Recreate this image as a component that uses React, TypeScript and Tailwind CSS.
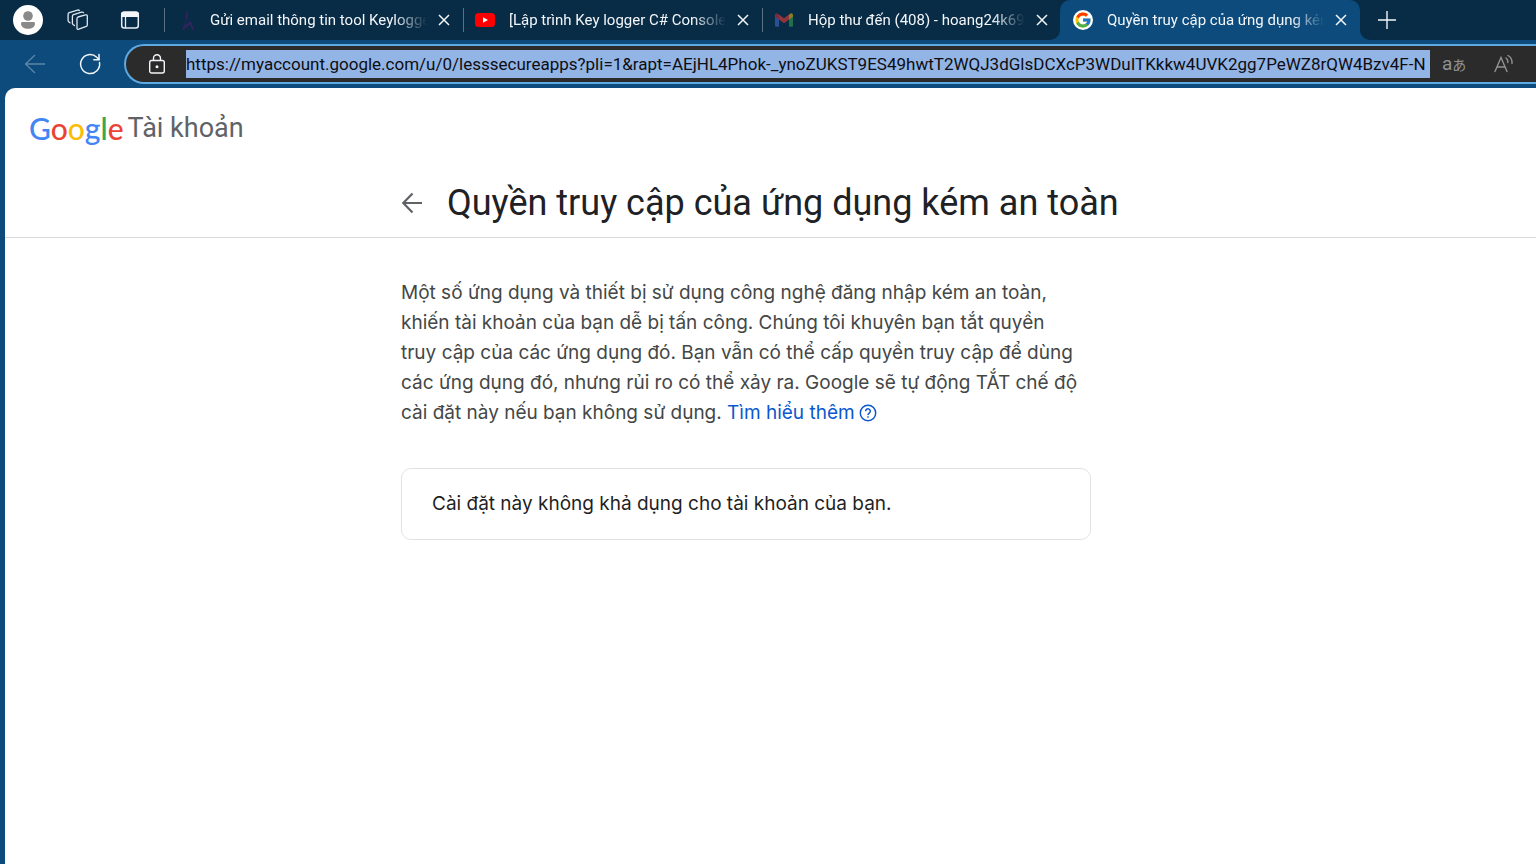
import type { ReactNode } from "react";
import { FcGoogle } from "react-icons/fc";

const uiFont = "font-['Roboto','Noto_Sans',sans-serif]";
const pageFont = "font-['Roboto','Liberation_Sans',sans-serif]";

const url =
  "https://myaccount.google.com/u/0/lesssecureapps?pli=1&rapt=AEjHL4Phok-_ynoZUKST9ES49hwtT2WQJ3dGlsDCXcP3WDuITKkkw4UVK2gg7PeWZ8rQW4Bzv4F-N";

function SiteIcon() {
  return (
    <svg viewBox="0 0 20 20" className="size-5" fill="#33235f" aria-hidden="true">
      <path d="M10.300 1h1.200l.4 6-2.800 8.500L8.500 20H6.300l3.500-9.500z" />
      <path d="M8.800 16 13.500 11.800q1.300-.9 1.900.6L18.200 20h-2.100l-2.300-5.700-5 4.700z" />
    </svg>
  );
}

function YoutubeIcon() {
  return (
    <svg viewBox="0 0 20 20" className="size-5" aria-hidden="true">
      <rect x="0" y="3" width="20" height="14" rx="3.500" fill="#f00" />
      <path d="M8 7.200v5.600l5-2.800z" fill="#fff" />
    </svg>
  );
}

function GmailIcon() {
  return (
    <svg viewBox="0 0 20 20" className="size-5" aria-hidden="true">
      <path d="M1 5v10.500c0 .8.500 1.300 1.300 1.300H5V8.200z" fill="#285294" />
      <path d="M15 8.200v8.600h2.700c.8 0 1.300-.5 1.300-1.300V5z" fill="#22704a" />
      <path d="M5 4.500v5l5 3.800 5-3.800v-5l-5 3.800z" fill="#92353a" />
      <path d="M1 5.200v1.500l4 3V4.500l-.8-.6C2.700 2.800 1 3.500 1 5.200z" fill="#7c2b3d" />
      <path d="M19 5.200v1.500l-4 3V4.500l.8-.6C17.300 2.800 19 3.500 19 5.200z" fill="#8f7c25" />
    </svg>
  );
}

function GoogleIcon() {
  return (
    <span className="flex size-5 items-center justify-center rounded-full bg-white">
      <FcGoogle className="size-[18px]" aria-hidden="true" />
    </span>
  );
}

function Tab({ icon, title, active, divided }: { icon: ReactNode; title: string; active?: boolean; divided?: boolean }) {
  return (
    <div
      className={
        active
          ? "relative -ml-px flex h-10 w-[300px] shrink-0 items-center rounded-t-[10px] bg-[#0c4b7b] pl-[13px]"
          : "relative flex h-10 w-[299px] shrink-0 items-center pl-3"
      }
    >
      {divided && <span className="absolute top-2 left-0 h-6 w-px bg-[#5a7083]" />}
      {active && (
        <>
          <svg viewBox="0 0 10 10" className="absolute bottom-0 -left-[10px] size-[10px]" aria-hidden="true">
            <path d="M10 0v10H0A10 10 0 0 0 10 0z" fill="#0c4b7b" />
          </svg>
          <svg viewBox="0 0 10 10" className="absolute -right-[10px] bottom-0 size-[10px]" aria-hidden="true">
            <path d="M0 0v10h10A10 10 0 0 1 0 0z" fill="#0c4b7b" />
          </svg>
        </>
      )}
      <button type="button" className="flex items-center gap-[14px] text-left">
        <span className="size-5 shrink-0">{icon}</span>
        <span className="block w-[217px] overflow-hidden mask-r-from-85% text-[15px] leading-6 whitespace-nowrap text-[#f3f6f9]">
          {title}
        </span>
      </button>
      <button type="button" aria-label="Đóng tab" className="ml-[7px] flex size-5 items-center justify-center">
        <svg viewBox="0 0 12 12" className="size-3" fill="none" stroke="#f3f6f9" strokeWidth="1.500" aria-hidden="true">
          <path d="M1 1l10 10M11 1 1 11" />
        </svg>
      </button>
    </div>
  );
}

function TabStrip() {
  return (
    <header className="flex h-10 items-center bg-[#082b46]">
      <div className="flex w-[164px] shrink-0 items-center pl-[13px]">
        <button type="button" aria-label="Hồ sơ" className="size-[30px]">
          <svg viewBox="0 0 30 30" className="size-[30px]" aria-hidden="true">
            <circle cx="15" cy="15" r="15" fill="#fff" />
            <circle cx="15" cy="11" r="4.800" fill="#8a8a8a" />
            <path d="M8 18.500c0-.8.600-1.500 1.500-1.500h11c.9 0 1.500.7 1.500 1.500 0 3.600-3 5.300-7 5.300s-7-1.700-7-5.300z" fill="#8a8a8a" />
          </svg>
        </button>
        <button type="button" aria-label="Không gian làm việc" className="ml-6 size-[22px]">
          <svg viewBox="0 0 22 22" className="size-[22px]" fill="none" stroke="#dfe7ee" strokeWidth="1.300" strokeLinejoin="round" strokeLinecap="round" aria-hidden="true">
            <path d="M10 9.500q0-1.100 1-1.500l7.500-2.100q1.800-.4 1.800 1v9q0 1.100-1 1.500l-7.500 2.800q-1.800.5-1.800-1z" />
            <path d="M7.500 16.500 6 15.400q-.6-.5-.6-1.200V7.200q0-1.200 1.200-1.600L14.500 3.200q1.500-.3 2 .6" />
            <path d="M3 13.800 1.700 12.800q-.6-.5-.6-1.200V5.300q0-1.200 1.200-1.600L10.500 1.100q1.300-.3 1.800.4" />
          </svg>
        </button>
        <button type="button" aria-label="Trình đơn tab" className="ml-[31px] size-5">
          <svg viewBox="0 0 20 20" className="size-5" aria-hidden="true">
            <rect x="1.700" y="2.200" width="16.600" height="15.800" rx="2.500" fill="none" stroke="#e9eef3" strokeWidth="1.500" />
            <path d="M1 7V4.500A3 3 0 0 1 4 1.500h12a3 3 0 0 1 3 3V7z" fill="#f3f6f9" />
            <path d="M5.500 7v11" stroke="#e9eef3" strokeWidth="1.300" />
          </svg>
        </button>
      </div>
      <nav aria-label="Tab" className="flex">
        <Tab divided icon={<SiteIcon />} title="Gửi email thông tin tool Keylogger" />
        <Tab divided icon={<YoutubeIcon />} title="[Lập trình Key logger C# Console]" />
        <Tab divided icon={<GmailIcon />} title="Hộp thư đến (408) - hoang24k69" />
        <Tab active icon={<GoogleIcon />} title="Quyền truy cập của ứng dụng kém" />
      </nav>
      <button type="button" aria-label="Tab mới" className="ml-[17px] flex size-5 items-center justify-center">
        <svg viewBox="0 0 18 18" className="size-[18px]" fill="none" stroke="#f3f6f9" strokeWidth="1.400" aria-hidden="true">
          <path d="M9 0v18M0 9h18" />
        </svg>
      </button>
    </header>
  );
}

function Toolbar() {
  return (
    <div className="flex h-12 items-center bg-[#0c4b7b] pl-6">
      <button type="button" aria-label="Quay lại" className="size-[22px] shrink-0">
        <svg viewBox="0 0 22 22" className="size-[22px]" fill="none" stroke="#5c87a8" strokeWidth="1.300" aria-hidden="true">
          <path d="M21 11H1.500M11 2 1.500 11l9.500 9" />
        </svg>
      </button>
      <button type="button" aria-label="Làm mới" className="ml-8 size-6 shrink-0">
        <svg viewBox="0 0 24 24" className="size-6" fill="none" stroke="#f3f6f9" strokeWidth="1.500" strokeLinecap="round" aria-hidden="true">
          <path d="M21.500 10.500A9.500 9.500 0 1 1 18.700 5.200l2.300 2" />
          <path d="M21 2.500v5.200h-5.200" />
        </svg>
      </button>
      <div className="ml-[22px] flex h-10 min-w-0 flex-1 items-center rounded-l-full border-2 border-r-0 border-[#5ea9e2] bg-[#2b2b2b] pl-[22px]">
        <svg viewBox="0 0 18 20" className="h-5 w-[18px] shrink-0" fill="none" stroke="#f3f6f9" strokeWidth="1.400" aria-hidden="true">
          <rect x="1.700" y="6.500" width="14.600" height="12.500" rx="2" />
          <path d="M5.500 6.500V4.300a3.500 3.500 0 0 1 7 0v2.200" />
          <circle cx="9" cy="12.800" r=".8" fill="#f3f6f9" />
        </svg>
        <input
          type="text"
          aria-label="Thanh địa chỉ"
          defaultValue={url}
          className="ml-5 h-7 min-w-0 flex-1 bg-[#93b5e6] text-[17px] leading-7 text-[#0d0d12] outline-none"
        />
        <button type="button" aria-label="Dịch" className="ml-3 flex h-6 w-6 shrink-0 items-center text-[#929292]">
          <span className="text-[19px] leading-6">a</span>
          <span className="font-['Noto_Sans_CJK_JP',sans-serif] text-[14px] leading-6">あ</span>
        </button>
        <button type="button" aria-label="Đọc to" className="mr-[22px] ml-7 size-5 shrink-0">
          <svg viewBox="0 0 20 20" className="size-5" fill="none" stroke="#929292" strokeWidth="1.400" strokeLinecap="round" aria-hidden="true">
            <path d="M1 17.500 7 3.500l6 14M3 13h8" />
            <path d="M12 4q2 1.500 1.800 4.500M14 1.500q4.500 2.500 4 8" />
          </svg>
        </button>
      </div>
    </div>
  );
}

export default function App() {
  return (
    <div className={`${uiFont} flex min-h-screen flex-col overflow-hidden bg-[#0c4b7b]`}>
      <TabStrip />
      <Toolbar />
      <div className={`${pageFont} ml-[5px] flex-1 rounded-tl-[10px] bg-white`}>
        <div className="border-b border-[#dadce0] pt-6 pb-3">
          <a href="#account" className="ml-6 flex h-8 items-center gap-1 text-[27px] leading-8 text-[#5f6368]">
            <span className="font-['Lato',sans-serif] text-[30px] font-medium">
              <span className="text-[#4285f4]">G</span>
              <span className="text-[#ea4335]">o</span>
              <span className="text-[#fbbc05]">o</span>
              <span className="text-[#4285f4]">g</span>
              <span className="text-[#34a853]">l</span>
              <span className="text-[#ea4335]">e</span>
            </span>
            <span>Tài khoản</span>
          </a>
          <div className="mt-[37px] pr-[49px]">
            <div className="mx-auto flex w-[690px] items-center">
              <button type="button" aria-label="Quay lại" className="size-[22px] shrink-0">
                <svg viewBox="0 0 22 22" className="size-[22px]" fill="none" stroke="#5f6368" strokeWidth="2.200" aria-hidden="true">
                  <path d="M21 11H2.500M11.500 1.500 2.300 11l9.200 9.500" />
                </svg>
              </button>
              <h1 className="ml-6 text-[36px] leading-[44px] whitespace-nowrap text-[#202124]">
                Quyền truy cập của ứng dụng kém an toàn
              </h1>
            </div>
          </div>
        </div>
        <main className="pt-10 pr-[49px] font-['Inter','Roboto',sans-serif]">
          <div className="mx-auto w-[690px]">
            <p className="text-[19px] leading-[30px] whitespace-nowrap text-[#444746]">
              Một số ứng dụng và thiết bị sử dụng công nghệ đăng nhập kém an toàn,
              <br />
              khiến tài khoản của bạn dễ bị tấn công. Chúng tôi khuyên bạn tắt quyền
              <br />
              truy cập của các ứng dụng đó. Bạn vẫn có thể cấp quyền truy cập để dùng
              <br />
              các ứng dụng đó, nhưng rủi ro có thể xảy ra. Google sẽ tự động TẮT chế độ
              <br />
              cài đặt này nếu bạn không sử dụng.{" "}
              <a href="#learn-more" className="inline-flex items-center gap-1 text-[#0b57d0]">
                Tìm hiểu thêm
                <svg viewBox="0 0 18 18" className="size-[18px]" fill="none" stroke="#0b57d0" strokeWidth="1.500" aria-hidden="true">
                  <circle cx="9" cy="9" r="7.700" />
                  <path d="M6.700 7.200a2.300 2.300 0 1 1 3.700 1.800C9.500 9.700 9 10 9 11M9 12.200v1.500" />
                </svg>
              </a>
            </p>
            <section className="mt-10 rounded-[10px] border border-[#e0e2e5] px-[30px] py-5 text-[19px] leading-[30px] text-[#1f1f1f]">
              Cài đặt này không khả dụng cho tài khoản của bạn.
            </section>
          </div>
        </main>
      </div>
    </div>
  );
}
